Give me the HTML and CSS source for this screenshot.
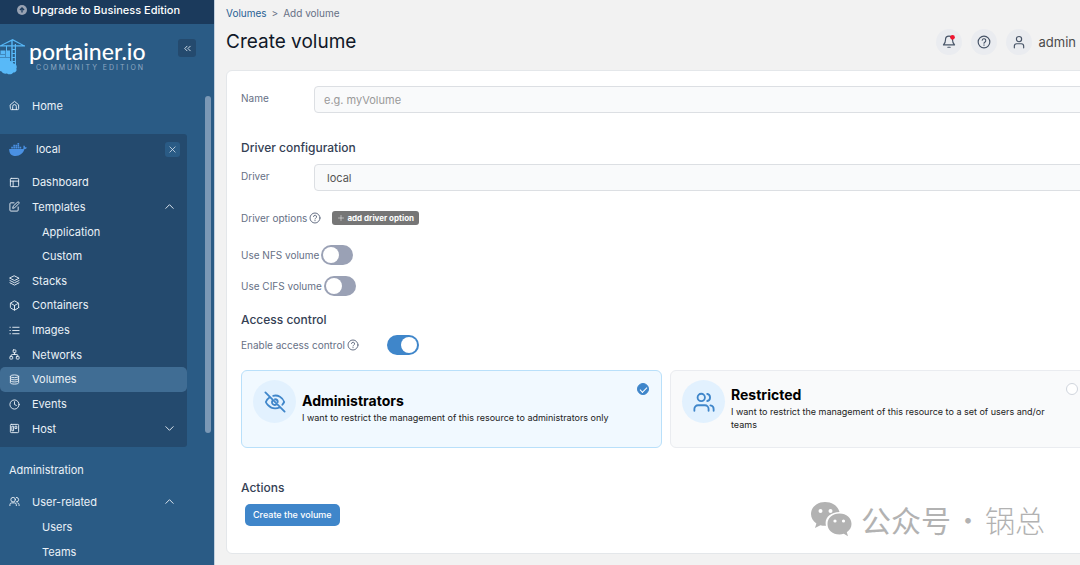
FILE: index.html
```html
<!DOCTYPE html>
<html lang="en">
<head>
<meta charset="utf-8">
<title>Create volume</title>
<link rel="stylesheet" href="styles.css">
</head>
<body>
<div class="app">
  <aside class="sidebar">
    <button class="upgrade" type="button">
      <svg class="upgrade-icon" viewBox="0 0 24 24"><circle cx="12" cy="12" r="12" fill="#98a2b3"/><path d="M12 18V7M7 12l5-5 5 5" fill="none" stroke="#1b3a5c" stroke-width="3"/></svg>
      Upgrade to Business Edition
    </button>
    <div class="brand">
      <svg class="brand-mark" viewBox="0 0 25 36" fill="#58b9f8">
        <path d="M0 6.200h25v1.200H0zM11.300 1h1.400v27h-1.400zM14.800 5h1.200v24h-1.200zM12.600 0l11.500 6.200-.5.8L12.600 1.600 1 7l-.5-.8z"/>
        <path d="M6 7h1v5H6zM5.500 11.500H10V18H5.500zM.5 11.500H5V15H.5zM0 15.500h5V18H0zM0 18.500h10V25H0z"/>
        <path d="M12 10h3v1h-3zM12 14h3v1h-3zM12 18h3v1h-3zM12 22h3v1h-3z"/>
        <path d="M0 24.500c1-3 5-4.500 8-2 2-1.300 5-.5 5.500 2 3 .3 4 3.500 2.800 5.200 1 2-.8 4-3 3.800-1.300 2-4.500 2.500-6.300 1C4.500 35 2 34 1.600 32.500L0 32z"/>
      </svg>
      <div class="brand-text">
        <span class="brand-name">portainer.io</span>
        <span class="brand-edition">COMMUNITY EDITION</span>
      </div>
      <button class="collapse" type="button" aria-label="Collapse sidebar"><svg class="icon" viewBox="0 0 24 24"><path d="m11 17-5-5 5-5M18 17l-5-5 5-5"/></svg></button>
    </div>
    <nav class="nav">
      <a class="nav-item" href="#"><svg class="icon" viewBox="0 0 24 24"><path d="M3 10.500 12 3l9 7.500V19a2 2 0 0 1-2 2H5a2 2 0 0 1-2-2zM8 21v-7a4 4 0 0 1 8 0v7"/></svg>Home</a>
      <section class="environment">
        <header class="environment-head">
          <svg class="whale" viewBox="0 0 34 25" fill="#4a90e2"><path d="M0 11.500h26c1.500-.3 2-1.500 1.500-3-.5-1.700 0-3 1-4 1.400 1 2.200 2.500 2.200 3.800 1.200-.2 2.400 0 3.300.7-.8 1.800-2.300 2.700-4.500 2.700C27 20 21 25 12.500 25 4 25 0 20 0 11.500zM4 7h3.200v3.500H4zM8 7h3.200v3.500H8zM12 7h3.200v3.500H12zM16 7h3.200v3.500H16zM20 7h3.200v3.500H20zM8 3.500h3.200v3H8zM12 3.500h3.200v3H12zM16 3.500h3.200v3H16zM16 0h3.200v3H16z"/></svg>
          <span class="environment-name">local</span>
          <button class="close" type="button" aria-label="Close environment"><svg class="icon" viewBox="0 0 24 24"><path d="m5 5 14 14M19 5 5 19"/></svg></button>
        </header>
        <div class="nav-list">
          <a class="nav-item" href="#"><svg class="icon" viewBox="0 0 24 24"><rect x="3" y="3" width="18" height="18" rx="2"/><path d="M3 9h18M9 21V9"/></svg>Dashboard</a>
          <a class="nav-item" href="#"><svg class="icon" viewBox="0 0 24 24"><path d="M11 4H4a2 2 0 0 0-2 2v14a2 2 0 0 0 2 2h14a2 2 0 0 0 2-2v-7M18.500 2.500a2.100 2.100 0 0 1 3 3L12 15l-4 1 1-4z"/></svg>Templates<svg class="icon chevron" viewBox="0 0 24 24"><path d="m4 16 8-8 8 8"/></svg></a>
          <a class="nav-item nav-sub" href="#">Application</a>
          <a class="nav-item nav-sub" href="#">Custom</a>
          <a class="nav-item" href="#"><svg class="icon" viewBox="0 0 24 24"><path d="m12 2 10 5-10 5L2 7zM2 12l10 5 10-5M2 17l10 5 10-5"/></svg>Stacks</a>
          <a class="nav-item" href="#"><svg class="icon" viewBox="0 0 24 24"><path d="M21 16V8a2 2 0 0 0-1-1.700l-7-4a2 2 0 0 0-2 0l-7 4A2 2 0 0 0 3 8v8a2 2 0 0 0 1 1.700l7 4a2 2 0 0 0 2 0l7-4a2 2 0 0 0 1-1.700zM3.300 7 12 12l8.700-5M12 22V12"/></svg>Containers</a>
          <a class="nav-item" href="#"><svg class="icon" viewBox="0 0 24 24"><path d="M8 5h14M8 12h14M8 19h14M2 5h1M2 12h1M2 19h1"/></svg>Images</a>
          <a class="nav-item" href="#"><svg class="icon" viewBox="0 0 24 24"><rect x="9" y="2" width="6" height="6" rx="1"/><rect x="2" y="16" width="6" height="6" rx="1"/><rect x="16" y="16" width="6" height="6" rx="1"/><path d="M12 8v4M5 16v-2a2 2 0 0 1 2-2h10a2 2 0 0 1 2 2v2"/></svg>Networks</a>
          <a class="nav-item nav-current" href="#" aria-current="page"><svg class="icon" viewBox="0 0 24 24"><ellipse cx="12" cy="5" rx="9" ry="3"/><path d="M3 5v14c0 1.700 4 3 9 3s9-1.300 9-3V5M3 9.700c0 1.700 4 3 9 3s9-1.300 9-3M3 14.300c0 1.700 4 3 9 3s9-1.300 9-3"/></svg>Volumes</a>
          <a class="nav-item" href="#"><svg class="icon" viewBox="0 0 24 24"><circle cx="12" cy="12" r="10"/><path d="M12 6v6l4 2"/></svg>Events</a>
          <a class="nav-item" href="#"><svg class="icon" viewBox="0 0 24 24"><rect x="3" y="3" width="18" height="18" rx="2"/><path d="M7 7h3v10H7zM14 7h3v5h-3z"/></svg>Host<svg class="icon chevron" viewBox="0 0 24 24"><path d="m4 8 8 8 8-8"/></svg></a>
        </div>
      </section>
      <h2 class="nav-title">Administration</h2>
      <a class="nav-item" href="#"><svg class="icon" viewBox="0 0 24 24"><circle cx="9" cy="8" r="5"/><path d="M2 21v-2a4 4 0 0 1 4-4h6a4 4 0 0 1 4 4v2M16 3a5 5 0 0 1 0 10M19 15a4 4 0 0 1 3 4v2"/></svg>User-related<svg class="icon chevron" viewBox="0 0 24 24"><path d="m4 16 8-8 8 8"/></svg></a>
      <a class="nav-item nav-sub" href="#">Users</a>
      <a class="nav-item nav-sub" href="#">Teams</a>
    </nav>
    <div class="scroll-thumb"></div>
  </aside>

  <main class="main">
    <nav class="crumbs"><a class="crumb-link" href="#">Volumes</a><span>&gt;</span><span>Add volume</span></nav>
    <header class="page-head">
      <h1 class="page-title">Create volume</h1>
      <div class="user-tools">
        <button class="round" type="button" aria-label="Notifications"><svg class="icon" viewBox="0 0 24 24"><path d="M2.500 17c2-2 3.500-4 3.500-9a6 6 0 0 1 12 0c0 5 1.500 7 3.500 9zM10 21h4"/><circle class="alert-dot" cx="18" cy="4" r="4"/></svg></button>
        <button class="round" type="button" aria-label="Help"><svg class="icon" viewBox="0 0 24 24"><circle cx="12" cy="12" r="10"/><path d="M9 9a3 3 0 0 1 6 1c0 2-3 2.500-3 4M12 17v.5"/></svg></button>
        <button class="round" type="button" aria-label="Account"><svg class="icon" viewBox="0 0 24 24"><circle cx="12" cy="7" r="4.500"/><path d="M4 22v-3a4 4 0 0 1 4-4h8a4 4 0 0 1 4 4v3"/></svg></button>
        <span class="user-name">admin</span>
      </div>
    </header>

    <form class="card">
      <div class="field">
        <label for="name">Name</label>
        <input class="control" id="name" type="text" placeholder="e.g. myVolume">
      </div>
      <h2 class="section section-driver">Driver configuration</h2>
      <div class="field">
        <label for="driver">Driver</label>
        <select class="control control-select" id="driver"><option>local</option></select>
      </div>
      <div class="line line-options">
        <span>Driver options</span>
        <svg class="icon help" viewBox="0 0 24 24"><circle cx="12" cy="12" r="10"/><path d="M9 9a3 3 0 0 1 6 1c0 2-3 2.500-3 4M12 17v.5"/></svg>
        <button class="add-option" type="button"><svg class="icon" viewBox="0 0 24 24"><path d="M12 2v20M2 12h20"/></svg>add driver option</button>
      </div>
      <div class="line line-nfs"><label for="nfs">Use NFS volume</label><input class="switch" id="nfs" type="checkbox"></div>
      <div class="line line-cifs"><label for="cifs">Use CIFS volume</label><input class="switch" id="cifs" type="checkbox"></div>
      <h2 class="section section-access">Access control</h2>
      <div class="line line-access">
        <label for="access">Enable access control</label>
        <svg class="icon help" viewBox="0 0 24 24"><circle cx="12" cy="12" r="10"/><path d="M9 9a3 3 0 0 1 6 1c0 2-3 2.500-3 4M12 17v.5"/></svg>
        <input class="switch switch-access" id="access" type="checkbox" checked>
      </div>
      <div class="choices">
        <label class="choice choice-on">
          <input class="choice-radio" type="radio" name="owner" checked>
          <span class="choice-icon"><svg class="icon" viewBox="0 0 24 24"><path d="M10 5.200A10 10 0 0 1 22 12a13 13 0 0 1-2 3M6.500 6.500A13 13 0 0 0 2 12s3 7 10 7a10 10 0 0 0 5.500-1.500M9.900 9.900a3 3 0 1 0 4.200 4.200M12 9a3 3 0 0 1 3 3M1.500 1.500l21 21"/></svg></span>
          <span class="choice-body"><strong class="choice-title">Administrators</strong><span>I want to restrict the management of this resource to administrators only</span></span>
        </label>
        <label class="choice">
          <input class="choice-radio" type="radio" name="owner">
          <span class="choice-icon"><svg class="icon" viewBox="0 0 24 24"><circle cx="9" cy="7" r="4"/><path d="M1.500 21.500v-2a4 4 0 0 1 4-4h7.500a4 4 0 0 1 4 4v2M15.500 3.100a4 4 0 0 1 0 7.800M19 15.600a4 4 0 0 1 3.500 4v1.900"/></svg></span>
          <span class="choice-body"><strong class="choice-title">Restricted</strong><span>I want to restrict the management of this resource to a set of users and/or teams</span></span>
        </label>
      </div>
      <h2 class="section section-actions">Actions</h2>
      <button class="submit" type="submit">Create the volume</button>
    </form>
    <div class="watermark" lang="zh">
      <svg class="wechat" viewBox="0 0 42 36"><path fill="#b2b2b2" d="M15 1C7 1 1 6.300 1 13c0 4 2 7.200 5.400 9.400L5 27l5.400-2.800c1.800.5 3.500.7 5.600.6-2-7.300 4-13.600 13.500-13.700C28 5 22.500 1 15 1z"/><path fill="#b2b2b2" d="M29.500 12.500C22.500 12.500 17.500 17 17.500 23s5 10.500 12 10.500c1.500 0 3-.2 4.300-.7L38 35.200l-1.200-4C39.600 29.300 41.500 26.500 41.500 23c0-6-5-10.500-12-10.500z"/><g fill="#fff"><circle cx="10.500" cy="10" r="2"/><circle cx="20.500" cy="10" r="2"/><circle cx="25" cy="20" r="1.600"/><circle cx="33.500" cy="20" r="1.600"/></g></svg>
      <span class="watermark-kind">公众号</span><span class="dot">·</span><span>锅总</span>
    </div>
  </main>
</div>
</body>
</html>
```
FILE: styles.css
```css
* { box-sizing: border-box; }
body {
  margin: 0;
  font: 10px/16px Inter, "Liberation Sans", sans-serif;
  color: #667085;
  background: #f2f2f2;
  overflow: hidden;
}
button, input, select { font: inherit; margin: 0; }
button { border: 0; padding: 0; cursor: pointer; }
a { text-decoration: none; color: inherit; }
h1, h2 { margin: 0; font-weight: 400; }
.icon {
  width: 11px;
  height: 11px;
  flex: none;
  fill: none;
  stroke: currentColor;
  stroke-width: 2;
  stroke-linecap: round;
  stroke-linejoin: round;
}
.app { display: flex; height: 100vh; }

/* Sidebar */
.sidebar {
  position: relative;
  width: 215px;
  flex: none;
  overflow: hidden;
  background: #2a5b85;
  border-right: 1px solid #c3d0de;
  color: #eaf1f7;
  font-size: 11px;
}
.upgrade {
  display: flex;
  align-items: center;
  gap: 5px;
  width: 100%;
  height: 24px;
  padding: 0 0 4px 17px;
  background: #1b3a5c;
  color: #fff;
  font-weight: 500;
}
.upgrade-icon { width: 10px; height: 10px; }
.brand { display: flex; align-items: flex-start; padding-top: 15px; height: 66px; }
.brand-mark { width: 25px; height: 36px; flex: none; }
.brand-text { display: flex; flex-direction: column; padding-left: 4px; width: 153px; }
.brand-name { font: 500 23px/25px Lato, sans-serif; color: #fff; }
.brand-edition { padding-left: 7px; font-size: 7px; line-height: 7px; letter-spacing: 2px; color: #8fa9c3; }
.collapse, .close {
  display: grid;
  place-items: center;
  width: 18px;
  height: 18px;
  border-radius: 3px;
  background: #244a6e;
  color: #dbe6f0;
}
.nav { padding-right: 27px; }
.nav-item {
  display: flex;
  align-items: center;
  gap: 12px;
  height: 25px;
  padding: 0 12px 0 9px;
  border-radius: 5px;
}
.nav > .nav-item:first-child { margin-top: 3px; }
.nav-sub { padding-left: 42px; }
.nav-current { background: #406d94; }
.chevron { margin-left: auto; }
.environment { margin-top: 16px; padding-bottom: 6px; background: #244a6e; border-radius: 0 3px 3px 0; }
.environment-head { display: flex; align-items: center; height: 30px; margin-bottom: 6px; padding: 0 7px 0 9px; }
.whale { width: 18px; height: 13px; }
.environment-name { flex: 1; padding-left: 9px; }
.close { width: 15px; height: 15px; background: #2a5b85; }
.close .icon { width: 9px; height: 9px; }
.nav-list { display: grid; grid-auto-rows: 1fr; min-height: 271px; }
.nav-list .nav-item { height: auto; }
.nav-title { margin: 15px 0 11px; padding-left: 9px; font-size: 11px; line-height: 16px; }
.scroll-thumb {
  position: absolute;
  top: 96px;
  right: 3px;
  width: 6px;
  height: 337px;
  border-radius: 3px;
  background: #7b98b5;
}

/* Page */
.main { flex: 1; min-width: 0; padding: 5px 0 0 11px; }
.crumbs { display: flex; gap: 5px; }
.crumb-link { color: #286194; }
.page-head { display: flex; align-items: center; justify-content: space-between; height: 26px; margin: 8px 0 15px; padding-right: 4px; }
.page-title { font-size: 19px; line-height: 26px; color: #101828; }
.user-tools { display: flex; align-items: center; gap: 9px; }
.round { display: grid; place-items: center; width: 26px; height: 26px; border-radius: 50%; background: #eaecf0; color: #475467; }
.round .icon { width: 14px; height: 14px; }
.alert-dot { fill: #f0142f; stroke: none; }
.user-name { margin-left: -2px; font-size: 13px; color: #4b4b4b; }

.card {
  margin-right: -28px;
  padding: 15px 16px 27px 14px;
  background: #fff;
  border: 1px solid #e4e7ea;
  border-radius: 6px;
}
.field { display: grid; grid-template-columns: 73px 1fr; }
.field label { padding-top: 4px; }
.control {
  width: 100%;
  height: 27px;
  padding: 0 9px;
  border: 1px solid #dcdfe3;
  border-radius: 4px;
  background: #f9fafb;
  color: #555;
  font-size: 11px;
}
.control::placeholder { color: #999; opacity: 1; }
.control-select { appearance: none; padding-left: 12px; }
.section { font-size: 12px; font-weight: 500; line-height: 16px; color: #344054; }
.section-driver { margin: 27px 0 8px; }
.section-access { margin: 16px 0 7px; }
.section-actions { margin: 32px 0 8px; }
.line { display: flex; align-items: center; gap: 2px; height: 20px; }
.line-options { margin: 17px 0; }
.line-cifs { margin-top: 11px; }
.help { width: 12px; height: 12px; }
.add-option {
  display: flex;
  align-items: center;
  gap: 3px;
  height: 14px;
  margin-left: 9px;
  padding: 0 5px 0 6px;
  border-radius: 3px;
  background: #767676;
  color: #fff;
  font-size: 8px;
  font-weight: 700;
}
.add-option .icon { width: 6px; height: 6px; }
.switch {
  appearance: none;
  display: flex;
  width: 32px;
  height: 20px;
  padding: 2px;
  border-radius: 10px;
  background: #9aa1b5;
  cursor: pointer;
}
.switch::before { content: ""; width: 16px; height: 16px; border-radius: 50%; background: #fff; }
.switch:checked { background: #3f86ca; justify-content: flex-end; }
.switch-access { margin-left: 26px; }
.choices { display: grid; grid-template-columns: 1fr 1fr; gap: 8px; margin-top: 15px; }
.choice {
  position: relative;
  display: flex;
  align-items: flex-start;
  gap: 6px;
  min-height: 78px;
  padding: 9px 24px 12px 11px;
  border: 1px solid #eaecf0;
  border-radius: 6px;
  background: #f9fafb;
  color: #222;
  font-size: 9px;
  line-height: 13px;
}
.choice-on { border-color: #b9e0fa; background: #f1f9ff; }
.choice-icon { display: grid; place-items: center; width: 43px; height: 43px; flex: none; border-radius: 50%; background: #e2f1fe; color: #3f86ca; }
.choice-icon .icon { width: 22px; height: 22px; }
.choice-body { display: flex; flex-direction: column; align-self: center; }
.choice-title { font-size: 14px; line-height: 20px; color: #000; }
.choice-radio {
  position: absolute;
  top: 12px;
  right: 12px;
  appearance: none;
  width: 12px;
  height: 12px;
  border: 1px solid #d0d5dd;
  border-radius: 50%;
  background: #fff;
}
.choice-radio:checked { display: grid; place-items: center; border-color: #3f86ca; background: #3f86ca; }
.choice-radio:checked::before { content: ""; width: 6px; height: 3px; border: solid #fff; border-width: 0 0 1px 1px; rotate: -45deg; }
.submit { height: 22px; margin-left: 4px; padding: 0 8px; border-radius: 5px; background: #3f86ca; color: #fff; font-size: 9px; font-weight: 500; }

.watermark {
  position: absolute;
  right: 35px;
  bottom: 28px;
  display: flex;
  align-items: center;
  color: #b2b2b2;
  font: 300 30px/36px "Noto Sans CJK SC", sans-serif;
}
.watermark-kind { font-weight: 400; }
.wechat { width: 42px; height: 36px; margin-right: 9px; }
.dot { width: 34px; text-align: center; }
```
